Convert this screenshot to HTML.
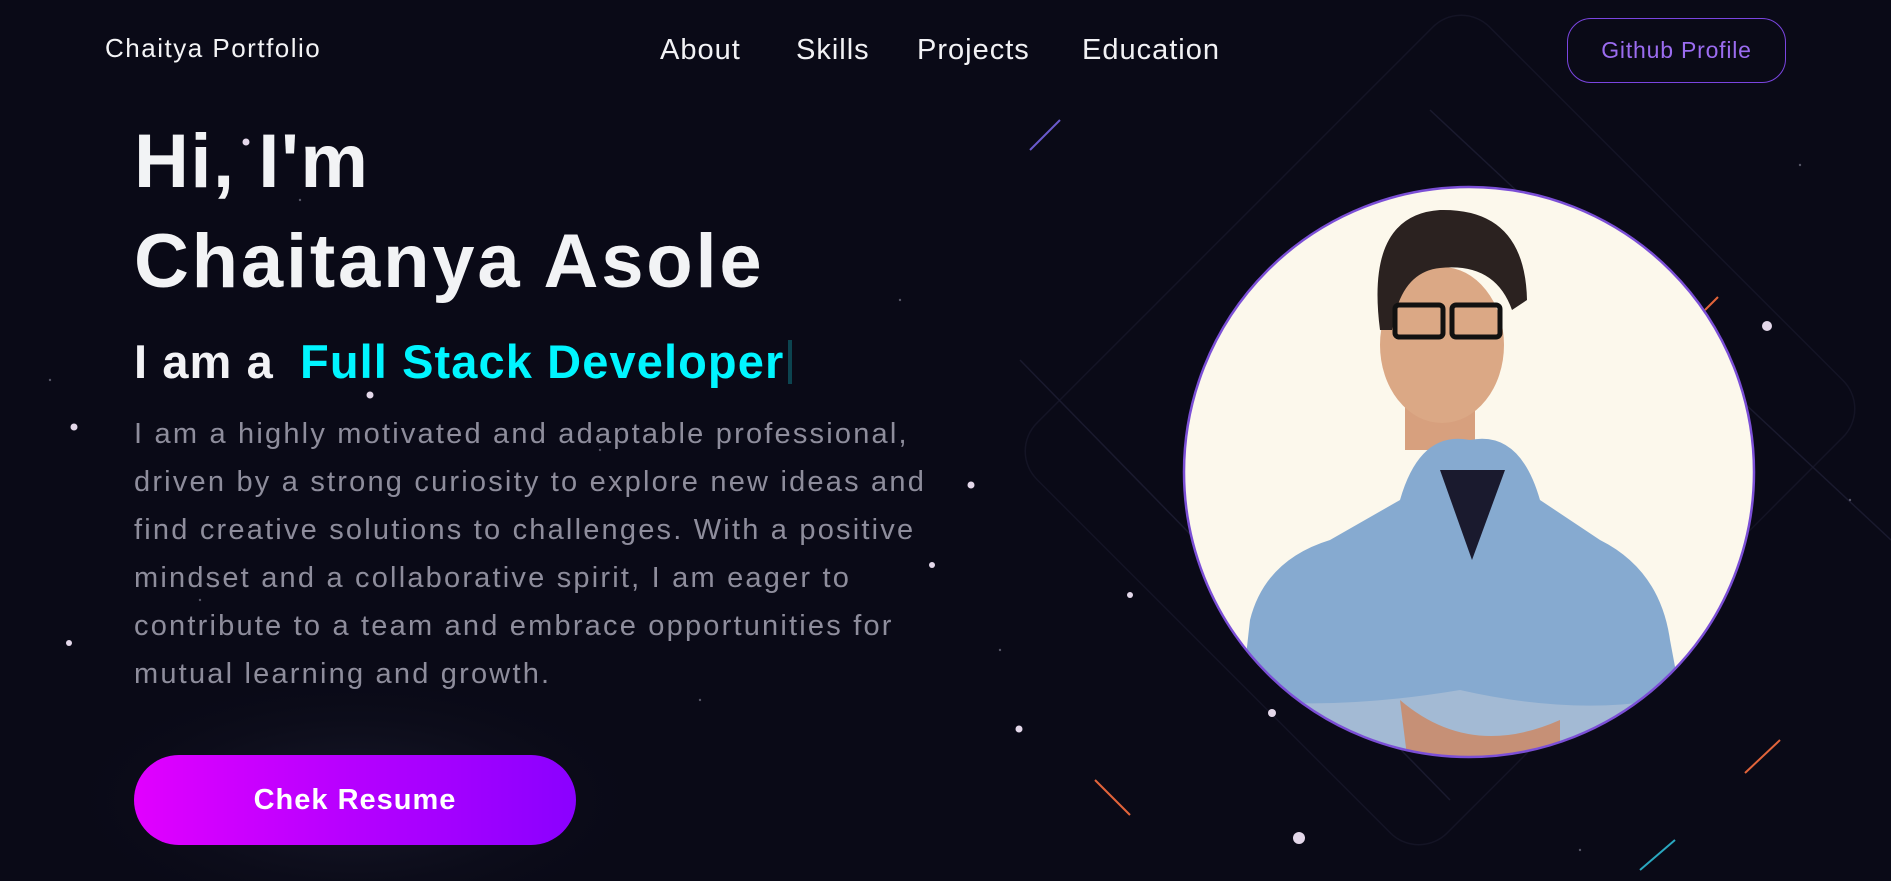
<!DOCTYPE html>
<html><head><meta charset="utf-8"><style>
*{margin:0;padding:0;box-sizing:border-box}
html,body{width:1891px;height:881px;overflow:hidden}
body{background:#0a0a17;font-family:"Liberation Sans",sans-serif;position:relative;color:#f2f2f5}
.a{position:absolute;white-space:nowrap}
.nav{font-size:29px;top:34px;letter-spacing:1px}
h1{position:absolute;left:134px;font-size:76px;font-weight:bold;color:#f2f3f5;line-height:1;letter-spacing:2.8px}
p.d{position:absolute;left:134px;top:410px;white-space:nowrap;font-size:29px;line-height:48px;color:#8e8d9c;letter-spacing:2.2px}
</style></head><body>
<svg class="a" style="left:0;top:0" width="1891" height="881">
<g stroke="#1a1a2e" stroke-width="1.5" fill="none">
<rect x="1150" y="110" width="580" height="640" rx="40" transform="rotate(45 1440 430)" opacity=".6"/>
<line x1="1430" y1="110" x2="1891" y2="540"/><line x1="1020" y1="360" x2="1450" y2="800"/>
</g>
<line x1="1030" y1="150" x2="1060" y2="120" stroke="#6a5acd" stroke-width="2"/>
<line x1="1095" y1="780" x2="1130" y2="815" stroke="#e2643a" stroke-width="2"/>
<line x1="1745" y1="773" x2="1780" y2="740" stroke="#e2643a" stroke-width="2"/>
<line x1="1640" y1="870" x2="1675" y2="840" stroke="#2aa8c0" stroke-width="2"/>
<line x1="1705" y1="310" x2="1718" y2="297" stroke="#e2643a" stroke-width="2"/>
<g fill="#e4d8ea"><circle cx="1767" cy="326" r="5"/><circle cx="1299" cy="838" r="6"/><circle cx="1272" cy="713" r="4"/><circle cx="1019" cy="729" r="3.5"/><circle cx="74" cy="427" r="3.5"/><circle cx="971" cy="485" r="3.5"/><circle cx="246" cy="142" r="3.5"/><circle cx="370" cy="395" r="3.5"/><circle cx="69" cy="643" r="3"/><circle cx="932" cy="565" r="3"/><circle cx="1130" cy="595" r="3"/></g>
<g fill="#555566"><circle cx="300" cy="200" r="1.2"/><circle cx="600" cy="450" r="1.2"/><circle cx="900" cy="300" r="1.2"/><circle cx="50" cy="380" r="1.2"/><circle cx="1800" cy="165" r="1.2"/><circle cx="1850" cy="500" r="1.2"/><circle cx="1000" cy="650" r="1.2"/><circle cx="700" cy="700" r="1.2"/><circle cx="200" cy="600" r="1.2"/><circle cx="1580" cy="850" r="1.2"/></g>
<defs><radialGradient id="g"><stop offset="0" stop-color="#1b1c2e"/><stop offset="1" stop-color="#0a0a17" stop-opacity="0"/></radialGradient>
<clipPath id="c"><circle cx="1469" cy="472" r="285"/></clipPath></defs>
<ellipse cx="355" cy="800" rx="300" ry="130" fill="url(#g)"/>
<g clip-path="url(#c)">
<rect x="1180" y="180" width="580" height="590" fill="#fcf8ec"/>
<rect x="1405" y="380" width="70" height="70" fill="#d7a07e"/>
<path d="M1230 800 L1250 620 Q1265 560 1330 540 L1400 500 Q1420 430 1470 440 Q1520 430 1540 500 L1600 540 Q1660 570 1670 640 L1700 800 Z" fill="#86aad0"/>
<path d="M1440 470 L1472 560 L1505 470 Z" fill="#1a1a2e"/>
<path d="M1250 700 Q1340 710 1460 690 Q1570 715 1660 700 L1670 780 L1250 780 Z" fill="#a3bad4"/>
<path d="M1400 700 Q1470 760 1560 720 L1560 780 L1410 780 Z" fill="#c69076"/>
<ellipse cx="1442" cy="345" rx="62" ry="78" fill="#dba885"/>
<path d="M1380 330 Q1365 215 1440 210 Q1525 208 1527 300 L1512 310 Q1495 262 1440 268 Q1400 272 1392 330 Z" fill="#2b2220"/>
<rect x="1395" y="305" width="48" height="32" rx="4" fill="none" stroke="#111" stroke-width="5"/>
<rect x="1452" y="305" width="48" height="32" rx="4" fill="none" stroke="#111" stroke-width="5"/>
</g>
<circle cx="1469" cy="472" r="285" fill="none" stroke="#7b4fd6" stroke-width="2.5"/>
</svg>
<div class="a" style="left:105px;top:33px;font-size:26px;letter-spacing:1.5px;color:#f4f4f6">Chaitya Portfolio</div>
<div class="a nav" style="left:660px">About</div>
<div class="a nav" style="left:796px">Skills</div>
<div class="a nav" style="left:917px">Projects</div>
<div class="a nav" style="left:1082px">Education</div>
<div class="a" style="left:1567px;top:18px;width:219px;height:65px;border:1.5px solid #7a45e0;border-radius:24px;color:#9b6cf0;font-size:23px;letter-spacing:.8px;text-align:center;line-height:62px">Github Profile</div>
<h1 style="top:124px;letter-spacing:1.5px">Hi, I'm</h1>
<h1 style="top:224px">Chaitanya Asole</h1>
<div class="a" style="left:134px;top:334px;font-size:47px;font-weight:bold;color:#f2f2f5;letter-spacing:1.1px">I am a <span style="color:#00f5ff;margin-left:12px">Full Stack Developer</span><span style="display:inline-block;width:4px;height:44px;background:#0c4450;margin-left:4px;vertical-align:-6px"></span></div>
<p class="d">I am a highly motivated and adaptable professional,<br>driven by a strong curiosity to explore new ideas and<br>find creative solutions to challenges. With a positive<br>mindset and a collaborative spirit, I am eager to<br>contribute to a team and embrace opportunities for<br>mutual learning and growth.</p>
<div class="a" style="left:134px;top:755px;width:442px;height:90px;border-radius:45px;background:linear-gradient(90deg,#e100ff,#8a00ff);font-size:29px;font-weight:bold;letter-spacing:1px;text-align:center;line-height:90px;color:#fff">Chek Resume</div>
</body></html>
